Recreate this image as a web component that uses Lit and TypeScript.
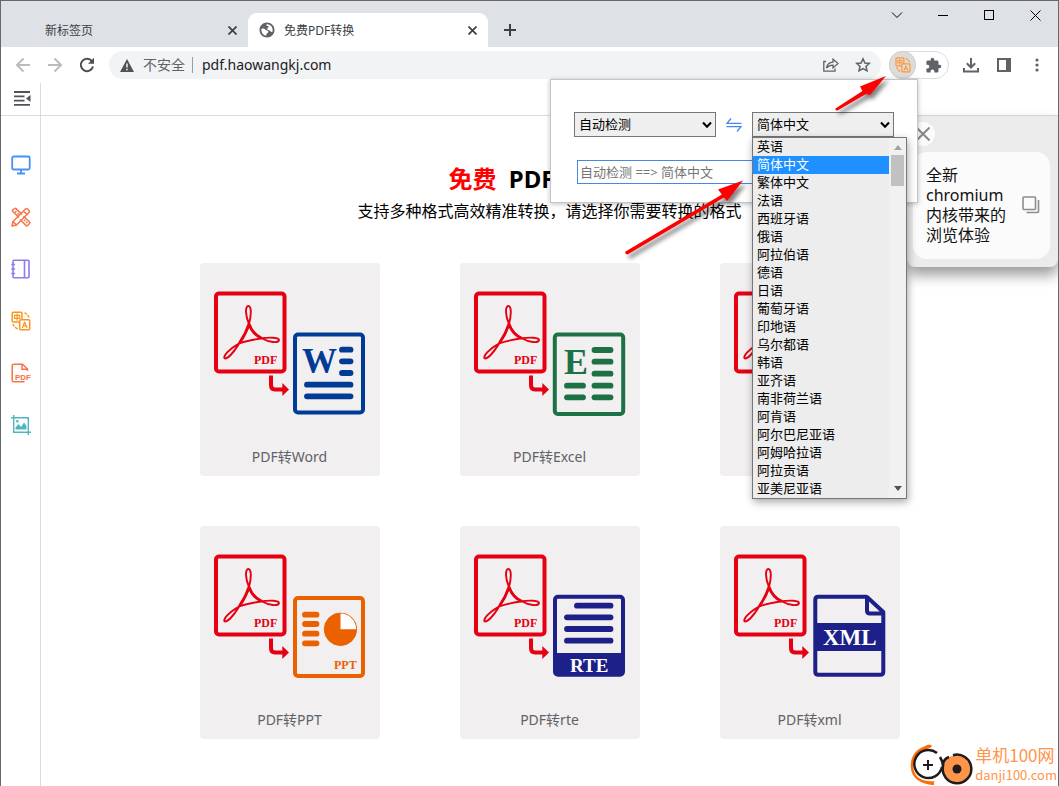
import { LitElement, html, css, svg } from 'lit';
import { customElement, property, state } from 'lit/decorators.js';

const LANGUAGES = [
  '英语', '简体中文', '繁体中文', '法语', '西班牙语', '俄语', '阿拉伯语', '德语', '日语', '葡萄牙语',
  '印地语', '乌尔都语', '韩语', '亚齐语', '南非荷兰语', '阿肯语', '阿尔巴尼亚语', '阿姆哈拉语', '阿拉贡语', '亚美尼亚语',
];

const RED = '#e60012';
const line = (x1: number, x2: number, y: number) => svg`<path d="M${x1 + 3} ${y}H${x2 - 3}" stroke-width="5.8" stroke-linecap="round"/>`;

// Right-hand document of each conversion picture
const documents: Record<string, unknown> = {
  word: svg`<g stroke="#003c96" fill="none">
    <rect x="95" y="71.5" width="68" height="78" rx="3" stroke-width="4"/>
    ${line(139, 153.5, 86.7)}${line(139, 153.5, 98.3)}${line(139, 153.5, 110)}
    ${line(104, 153.5, 121.7)}${line(104, 153.5, 133.3)}
    <text class="mark" x="102" y="110" font-size="35" fill="#003c96" stroke="none">W</text></g>`,
  excel: svg`<g stroke="#1c7145" fill="none">
    <rect x="94.8" y="71.5" width="68.4" height="79.5" rx="3" stroke-width="4"/>
    ${line(131.5, 153.5, 87)}${line(131.5, 153.5, 98.7)}${line(131.5, 153.5, 110.7)}${line(131.5, 153.5, 122.7)}${line(131.5, 153.5, 134.3)}
    ${line(104, 126, 122.7)}${line(104, 126, 134.3)}
    <text class="mark" x="104" y="111" font-size="36" fill="#1c7145" stroke="none">E</text></g>`,
  ppt: svg`<g stroke="#eb6100" fill="none">
    <rect x="95" y="72" width="68" height="78" rx="3" stroke-width="4"/>
    ${line(102, 119.5, 88.7)}${line(102, 119.5, 98)}${line(102, 119.5, 107.7)}${line(102, 119.5, 117.3)}
    <circle cx="140.5" cy="103.3" r="16.2" fill="#eb6100" stroke-width="1"/>
    <path d="M140.5 103.3V87.6A15.7 15.7 0 0 1 156.2 103.3Z" fill="#fff" stroke="none"/>
    <text class="mark" x="134" y="142.5" font-size="12" fill="#eb6100" stroke="none">PPT</text></g>`,
  rte: svg`<g stroke="#1d2088" fill="none">
    <rect x="95" y="70.7" width="68" height="78" rx="3" stroke-width="4"/>
    <path d="M95 127H163V148.7H95Z" fill="#1d2088" stroke="none"/>
    ${line(114, 153.5, 79.7)}${line(104, 153.5, 91.3)}${line(104, 153.5, 103)}${line(104, 153.5, 114.7)}
    <text class="mark" x="110" y="145.5" font-size="19" fill="#fff" stroke="none">RTE</text></g>`,
  xml: svg`<g stroke="#1d2088" fill="none">
    <path d="M146.5 70.7H98.3Q95.3 70.7 95.3 73.7V145.7Q95.3 148.7 98.3 148.7H160.3Q163.3 148.7 163.3 145.7V86L147 71V84.500Q147 87.500 150 87.500H163" stroke-width="4" stroke-linejoin="round"/>
    <path d="M94 97H165V125H94Z" fill="#1d2088" stroke="none"/>
    <text class="mark" x="103" y="119" font-size="23" fill="#fff" stroke="none">XML</text></g>`,
};

@customElement('convert-card')
class ConvertCard extends LitElement {
  @property() kind = 'word';
  @property() label = '';

  static styles = css`
    :host { display: block; }
    .card { display: flex; flex-direction: column; height: 213px; border-radius: 4px; background: #f1eff0; color: #606266; text-decoration: none; text-align: center; }
    .picture { display: block; width: 100%; height: 180px; }
    .caption { font-size: 14px; line-height: 28px; }
    .mark { font-family: "Liberation Serif", "Times New Roman", serif; font-weight: 700; }
  `;

  render() {
    return html`<a class="card" href="#">
      <svg class="picture" viewBox="0 0 180 180" aria-hidden="true">
        <rect x="16" y="30.5" width="68.500" height="78" rx="3" fill="none" stroke="${RED}" stroke-width="4"/>
        <path d="M49 61C45 52 45.200 43 48.300 43C51.500 43 51.500 52 49 61C47 68 43 74 39.300 80.300C34 89 28 95.500 25 95.500C22 94 29 86 39.300 80.300C46 78 54 76.500 61.700 75.300C70 74 79 74.500 79 77C78.500 80.500 69 79.500 61.700 75.300C55 72 51 66 49 61Z" fill="none" stroke="${RED}" stroke-width="1.900"/>
        <path d="M49 61C51 67 55.500 72.500 61.700 75.300M49 61C46.500 69 43 75 39.300 80.300" fill="none" stroke="${RED}" stroke-width="2.800"/>
        <text class="mark" x="54" y="101" font-size="12" fill="${RED}">PDF</text>
        <path d="M71 112.500V122Q71 126.500 75 126.500H83" fill="none" stroke="${RED}" stroke-width="4"/>
        <path d="M82.300 120L89 126.500L82.300 133Z" fill="${RED}"/>
        ${documents[this.kind]}
      </svg>
      <span class="caption">${this.label}</span>
    </a>`;
  }
}

const translateIcon = svg`<g fill="none" stroke="currentColor" stroke-width="1.500" stroke-linecap="round" stroke-linejoin="round">
  <path d="M11 8V2.200Q11 1.200 10 1.200H2.200Q1.200 1.200 1.200 2.200V10Q1.200 11 2.200 11H8"/>
  <rect x="8.700" y="8.700" width="10" height="10" rx="1"/>
  <path d="M3.500 4.300H8.700V7.300H3.500ZM6.100 2.800V9.300" stroke-width="1.200"/>
  <path d="M11.500 16.500L13.700 11L15.900 16.500M12.300 14.800H15.100" stroke-width="1.200"/>
  <path d="M14 2L15.500 3M17 4.500L17.800 6M2.200 13.500L3 15M4.500 16.500L6 17.700"/></g>`;

@customElement('app-root')
class AppRoot extends LitElement {
  @state() target = '简体中文';

  static styles = css`
    :host { display: block; font-family: "Noto Sans", "Noto Sans CJK SC", sans-serif; font-size: 13px; color: #000; }
    * { box-sizing: border-box; }
    button { padding: 0; border: 0; background: none; color: inherit; font: inherit; display: flex; align-items: center; justify-content: center; }
    svg { display: block; flex: none; }
    .frame { position: relative; display: flex; flex-direction: column; min-height: 100vh; border: 1px solid #66686b; background: #fff; overflow: hidden; }

    .tabs { display: flex; align-items: flex-end; height: 46px; background: #dee1e6; color: #3c4043; }
    .tab { display: flex; align-items: center; width: 240px; height: 34px; padding: 0 10px; font-size: 12px; }
    .tab .name { flex: 1; }
    .idle { width: 247px; padding-left: 44px; }
    .active { border-radius: 9px 9px 0 0; background: #fff; }
    .active .name { margin-left: 8px; }
    .tab-close { width: 12px; height: 12px; }
    .new-tab { width: 28px; height: 34px; margin-left: 8px; }
    .window { display: flex; align-self: flex-start; margin-left: auto; color: #000; }
    .window button { width: 46px; height: 28px; }

    .toolbar { display: flex; align-items: center; height: 36px; padding: 0 5px 0 6px; color: #5f6368; }
    .toolbar > button { width: 32px; height: 28px; }
    .toolbar > .tool { width: 33px; }
    .off { color: #babcbe; }
    .address { flex: 1; display: flex; align-items: center; height: 28px; min-width: 0; margin-left: 6px; padding: 0 10px 0 11px; border-radius: 14px; background: #f1f3f4; }
    .unsafe { margin-left: 9px; padding-right: 7px; border-right: 1px solid #9a9da1; font-size: 14px; line-height: 16px; white-space: nowrap; }
    .url { flex: 1; min-width: 0; height: 28px; padding: 0 9px 1px; border: 0; background: none; color: #202124; font: 14px "Noto Sans", sans-serif; }
    .address button { width: 16px; margin-left: 16px; }
    .extensions { display: flex; margin: 0 5px 0 8px; width: 60px; height: 28px; border: 1px solid #dadce0; border-radius: 14px; }
    .extensions button { width: 30px; height: 26px; }
    .extensions .translate { width: 28px; height: 28px; margin: -1px 3px 0 -1px; border-radius: 50%; background: #dcdcdc; border: 1px solid #cfcfcf; color: #ff9632; }

    .top { display: flex; height: 33px; border-bottom: 1px solid #dcdcdc; color: #5f6368; }
    .fold { width: 40px; border-right: 1px solid #dcdcdc; padding: 0 0 2px 4px; }
    .body { display: flex; flex: 1; }
    .side { display: flex; flex-direction: column; gap: 20px; flex: none; width: 40px; padding-top: 33px; border-right: 1px solid #dcdcdc; }
    .side button { height: 32px; width: 39px; }
    .blue { color: #4591f5; } .coral { color: #f77449; } .violet { color: #8d7bf2; } .orange { color: #f9941e; } .teal { color: #4fb6c0; }
    .main { flex: 1; display: flex; flex-direction: column; align-items: center; padding: 47px 20px; }
    h1 { margin: 0 0 5px; font-size: 24px; line-height: 32px; font-weight: 700; white-space: pre; }
    h1 em { font-style: normal; color: #f00; margin-right: 6px; }
    .lead { margin: 0 0 41px; font-size: 16px; line-height: 22px; }
    .grid { display: grid; grid-template-columns: repeat(3, 180px); gap: 50px 80px; }

    .tip { position: absolute; top: 115px; right: 0; width: 151px; padding: 36px 8px 8px 6px; border-radius: 0 0 8px 8px; background: #ebebeb; box-shadow: 0 8px 14px rgba(0,0,0,.4); }
    .tip-close { position: absolute; top: 6px; left: 4px; width: 24px; height: 24px; border-radius: 50%; background: #fbfbfb; color: #888; }
    .tip-card { display: flex; align-items: center; justify-content: space-between; padding: 13px 10px 14px 13px; border-radius: 14px; background: #fbfbfb; font-size: 16px; line-height: 20px; color: #111; }
    .tip-card p { margin: 0; width: 84px; }
    .tip-card button { color: #8c8c8c; }

    .popup { position: absolute; top: 78px; right: 140px; width: 368px; height: 124px; padding: 32px 23px; border: 1px solid #c4c6c9; background: #fff; box-shadow: 0 1px 5px rgba(0,0,0,.25); }
    .choices { display: flex; align-items: center; justify-content: space-between; }
    .choice { display: grid; width: 142px; }
    .choice > * { grid-area: 1 / 1; }
    .choice select { appearance: none; width: 142px; height: 25px; padding: 0 4px 2px; border: 1px solid #767676; border-radius: 0; background: #efefef; color: #000; font: inherit; outline: none; }
    .choice svg { place-self: center end; margin-right: 4px; pointer-events: none; }
    .query { display: block; width: 315px; height: 24px; margin: 23px 0 0 3px; padding: 0 2px 1px; border: 1px solid #4a86e8; font: inherit; outline: none; background: #fff; }
    .query::placeholder { color: #757575; }
    .list { position: absolute; z-index: 2; top: 57px; left: 201px; display: flex; width: 155px; border: 1px solid #767676; background: #ededed; box-shadow: 1px 3px 8px rgba(0,0,0,.35); }
    .list ul { flex: 1; margin: 0; padding: 0; list-style: none; }
    .list li { height: 18px; padding-left: 4px; line-height: 16px; white-space: nowrap; }
    .list .chosen { background: #1e90ff; color: #fff; }
    .bar { display: flex; flex-direction: column; align-items: center; width: 17px; padding: 7px 0; background: #f1f1f1; }
    .thumb { width: 13px; height: 31px; margin: 5px 0 auto; background: #c1c1c1; }

    .pointer { position: absolute; z-index: 3; pointer-events: none; filter: drop-shadow(3px 4px 2px rgba(0,0,0,.5)); }
    .near { top: 66px; left: 826px; }
    .far { top: 168px; left: 616px; }
    .brand { position: absolute; right: 1px; bottom: 0; display: flex; align-items: center; color: #ff944b; font-family: "Noto Sans CJK SC", sans-serif; }
    .brand p { margin: 0; font-size: 17px; line-height: 20px; white-space: nowrap; }
    .brand small { display: block; font-size: 13px; line-height: 20px; }
  `;

  private pick(e: Event) {
    this.target = (e.target as HTMLSelectElement).value;
  }

  private chevron() {
    return html`<svg width="10" height="8" viewBox="0 0 10 8" fill="none" stroke="#000" stroke-width="2"><path d="M1 1.500L5 5.800L9 1.500"/></svg>`;
  }

  render() {
    return html`<div class="frame">
      <nav class="tabs" aria-label="标签页">
        <div class="tab idle"><span class="name">新标签页</span>
          <button class="tab-close" aria-label="关闭">${this.cross(9, 1.7)}</button></div>
        <div class="tab active">
          <svg width="18" height="18" viewBox="0 0 24 24" fill="#5f6368"><path d="M12 2C6.480 2 2 6.480 2 12s4.480 10 10 10 10-4.480 10-10S17.520 2 12 2zM4.500 12c0-.600.100-1.200.300-1.800C7 9.500 9 10.500 10 11.500c1 1.200 3.500.500 3.800 2.500.200 2-2.300 2-2.500 3.500-.100 1-.300 1.700-.800 2-3.500-.700-6-3.800-6-7.500zM19 14.500c-1.500.500-2.500-.500-3-1.500-.600-1.200-2.500-.500-3.300-1.500-.900-1.200.300-2.500 1.300-3.200 1-.600-.200-1.800-1.200-1.600-1.300.300-1.800-1-1.300-2.200 4.300-.200 7.700 3 8 7 .100 1-.100 2-.500 3z"/></svg>
          <span class="name">免费PDF转换</span>
          <button class="tab-close" aria-label="关闭">${this.cross(9, 1.7)}</button></div>
        <button class="new-tab" aria-label="新标签页"><svg width="12" height="12" viewBox="0 0 12 12" stroke="#3c4043" stroke-width="2"><path d="M6 0V12M0 6H12"/></svg></button>
        <div class="window">
          <button aria-label="搜索标签页"><svg width="12" height="7" viewBox="0 0 12 7" fill="none" stroke="currentColor"><path d="M1 .500L6 5.500L11 .500"/></svg></button>
          <button aria-label="最小化"><svg width="10" height="10" viewBox="0 0 10 10" stroke="currentColor"><path d="M0 5.500H10"/></svg></button>
          <button aria-label="最大化"><svg width="10" height="10" viewBox="0 0 10 10" fill="none" stroke="currentColor"><rect x=".500" y=".500" width="9" height="9"/></svg></button>
          <button aria-label="关闭窗口">${this.cross(11, 1)}</button>
        </div>
      </nav>

      <div class="toolbar">
        <button class="off" aria-label="后退"><svg width="16" height="16" viewBox="0 0 16 16" fill="none" stroke="currentColor" stroke-width="2"><path d="M15 8H2.500M8.500 1.500L2 8L8.500 14.500"/></svg></button>
        <button class="off" aria-label="前进"><svg width="16" height="16" viewBox="0 0 16 16" fill="none" stroke="currentColor" stroke-width="2"><path d="M1 8H13.500M7.500 1.500L14 8L7.500 14.500"/></svg></button>
        <button aria-label="刷新"><svg width="16" height="16" viewBox="0 0 16 16" fill="none" stroke="#4b4e52" stroke-width="2"><path d="M13 4.200A6.200 6.200 0 1 0 14 9.600"/><path d="M15 .800V6.800H9Z" fill="#4b4e52" stroke="none"/></svg></button>
        <div class="address">
          <svg width="14" height="13" viewBox="0 0 14 13"><path d="M7 0L14 13H0Z" fill="#4f5256"/><path d="M7 4.500V8.500M7 9.700V11.300" stroke="#f1f3f4" stroke-width="1.500"/></svg>
          <span class="unsafe">不安全</span>
          <input class="url" aria-label="地址" .value=${'pdf.haowangkj.com'}>
          <button aria-label="分享"><svg width="16" height="14" viewBox="0 0 16 14" fill="none" stroke="currentColor" stroke-width="1.300"><path d="M3 3.500H.800V13.200H12V10.500M3.500 10C4 6.500 6.500 4.300 10 4.200V1.200L15 5.600L10 9.900V7.200C7.200 7.200 5 8 3.500 10Z"/></svg></button>
          <button aria-label="收藏"><svg width="16" height="16" viewBox="0 0 16 16" fill="none" stroke="currentColor" stroke-width="1.500"><path d="M8 1.800L9.900 6L14.300 6.400L11 9.400L12 13.800L8 11.500L4 13.800L5 9.400L1.700 6.400L6.100 6Z"/></svg></button>
        </div>
        <div class="extensions">
          <button class="translate" aria-label="翻译"><svg width="16" height="16" viewBox="0 0 20 20">${translateIcon}</svg></button>
          <button aria-label="扩展程序"><svg width="17" height="17" viewBox="0 0 24 24" fill="currentColor"><path d="M20.500 11H19V7c0-1.100-.900-2-2-2h-4V3.500a2.500 2.500 0 0 0-5 0V5H4c-1.100 0-2 .900-2 2v3.800h1.500a2.700 2.700 0 0 1 0 5.400H2V20c0 1.100.900 2 2 2h3.800v-1.500a2.700 2.700 0 0 1 5.400 0V22H17c1.100 0 2-.900 2-2v-4h1.500a2.500 2.500 0 0 0 0-5z"/></svg></button>
        </div>
        <button class="tool" aria-label="下载"><svg width="16" height="16" viewBox="0 0 16 16" fill="none" stroke="currentColor" stroke-width="2"><path d="M8 1V10M3.800 6.300L8 10.500L12.200 6.300M1 11V14.500H15V11"/></svg></button>
        <button class="tool" aria-label="侧边栏"><svg width="14" height="14" viewBox="0 0 14 14"><path d="M1 1H13V13H1Z" fill="none" stroke="currentColor" stroke-width="2"/><path d="M9 0H14V14H9Z" fill="currentColor"/></svg></button>
        <button class="tool" aria-label="菜单"><svg width="4" height="14" viewBox="0 0 4 14" fill="currentColor"><circle cx="2" cy="2" r="1.600"/><circle cx="2" cy="7" r="1.600"/><circle cx="2" cy="12" r="1.600"/></svg></button>
      </div>

      <header class="top">
        <button class="fold" aria-label="收起"><svg width="17" height="15" viewBox="0 0 17 15" stroke="#505357" stroke-width="1.800" fill="none"><path d="M0 1H16M0 5.300H10.500M0 9.600H10.500M0 13.900H16"/><path d="M12 7.500L16.500 4V11Z" fill="#505357" stroke="none"/></svg></button>
      </header>
      <div class="body">
        <aside class="side">
          <button class="blue" aria-label="桌面"><svg width="20" height="20" viewBox="0 0 20 20" fill="none" stroke="currentColor" stroke-width="1.800"><rect x="1.200" y="1.500" width="17.500" height="13" rx="1.500"/><path d="M10 14.500V18.500M6 18.500H14"/></svg></button>
          <button class="coral" aria-label="工具"><svg width="20" height="20" viewBox="0 0 20 20" fill="none" stroke="currentColor" stroke-width="1.500" stroke-linejoin="round"><path d="M8 10.500L1.800 4.500Q1 3.700 1.800 2.900L3.600 1.500Q4.300 .900 5 1.600L11 7.500M12.500 9L18.500 15Q19.200 15.800 18.500 16.500L16.500 18.500Q15.700 19.200 15 18.500L9 12.500"/><path d="M1 19L2 14.500L14.500 2Q15.500 1 16.500 2L18 3.500Q19 4.500 18 5.500L5.500 18ZM2 14.500L5.500 18M12.500 4L16 7.500M4 5.500L5.500 4M6.500 7.500L7.800 6.200M13 14L14.300 12.700M15 16L16.300 14.700"/></svg></button>
          <button class="violet" aria-label="笔记"><svg width="20" height="20" viewBox="0 0 20 20" fill="none" stroke="currentColor" stroke-width="1.600"><rect x="2" y="1.200" width="16" height="17.600" rx="1"/><path d="M13.500 1V19M.300 5.500H4M.300 10H4M.300 14.500H4"/></svg></button>
          <button class="orange" aria-label="翻译"><svg width="20" height="20" viewBox="0 0 20 20">${translateIcon}</svg></button>
          <button class="coral" aria-label="PDF"><svg width="20" height="20" viewBox="0 0 20 20" fill="none" stroke="currentColor" stroke-width="1.500"><path d="M13.500 18.800H2.500Q1.200 18.800 1.200 17.500V2.500Q1.200 1.200 2.500 1.200H11.500L16.500 6V8M11 1.500V6.300H16.500"/><text x="4" y="16.500" font-size="8" font-weight="700" font-family="Liberation Sans" fill="currentColor" stroke="none">PDF</text></svg></button>
          <button class="teal" aria-label="图片"><svg width="20" height="20" viewBox="0 0 20 20" fill="none" stroke="currentColor" stroke-width="1.400"><path d="M0 2.700H17.300V20M2.700 0V17.300H20"/><path d="M4.500 14.500V12.500L7.500 9L10 12L13 7.500L15.500 11V14.500Z" fill="currentColor" stroke="none"/><circle cx="6.300" cy="6.200" r="1.300" fill="currentColor" stroke="none"/></svg></button>
        </aside>
        <main class="main">
          <h1><em>免费</em> PDF转换工具</h1>
          <p class="lead">支持多种格式高效精准转换，请选择你需要转换的格式</p>
          <div class="grid">
            <convert-card kind="word" label="PDF转Word"></convert-card>
            <convert-card kind="excel" label="PDF转Excel"></convert-card>
            <convert-card kind="ppt" label="PDF转图片"></convert-card>
            <convert-card kind="ppt" label="PDF转PPT"></convert-card>
            <convert-card kind="rte" label="PDF转rte"></convert-card>
            <convert-card kind="xml" label="PDF转xml"></convert-card>
          </div>
        </main>
      </div>

      <section class="tip">
        <button class="tip-close" aria-label="关闭">${this.cross(14, 2)}</button>
        <div class="tip-card"><p>全新 chromium 内核带来的浏览体验</p>
          <button aria-label="复制"><svg width="18" height="18" viewBox="0 0 18 18" fill="none" stroke="currentColor" stroke-width="1.600"><rect x="1" y="1" width="12.500" height="12.500" rx="1"/><path d="M16.500 4V15.500Q16.500 16.500 15.500 16.500H4.500"/></svg></button></div>
      </section>

      <section class="popup">
        <div class="choices">
          <div class="choice"><select aria-label="源语言"><option>自动检测</option></select>${this.chevron()}</div>
          <svg width="16" height="14" viewBox="0 0 16 14" fill="none" stroke="#4a86f0" stroke-width="1.300"><path d="M5 .500L1 5.300H15.500M.500 8.700H15L11 13.500"/></svg>
          <div class="choice"><select aria-label="目标语言" .value=${this.target} @change=${this.pick}>
            ${LANGUAGES.map((n) => html`<option ?selected=${n === this.target}>${n}</option>`)}</select>${this.chevron()}</div>
        </div>
        <input class="query" aria-label="翻译内容" placeholder="自动检测 ==&gt; ${this.target}">
        <div class="list">
          <ul role="listbox" aria-label="语言">
            ${LANGUAGES.map((n) => html`<li role="option" class=${n === this.target ? 'chosen' : ''} aria-selected=${n === this.target} @click=${() => { this.target = n; }}>${n}</li>`)}
          </ul>
          <div class="bar"><svg width="8" height="5" viewBox="0 0 8 5"><path d="M0 5L4 0L8 5Z" fill="#a3a3a3"/></svg><div class="thumb"></div><svg width="8" height="5" viewBox="0 0 8 5"><path d="M0 0L4 5L8 0Z" fill="#505050"/></svg></div>
        </div>
      </section>

      <svg class="pointer near" width="70" height="50" viewBox="0 0 70 50" fill="#ff0000"><path d="M8.500 41.500L35.500 24L33 19.500L59 9L43 28L39 27L10.500 43.500Q8 43.500 8.500 41.500Z"/></svg>
      <svg class="pointer far" width="140" height="92" viewBox="0 0 140 92" fill="#ff0000"><path d="M8.500 82.500L105 25.500L101 20.500L126 11.500L110 32L107 28.500L10.500 85.500Q7.500 85.500 8.500 82.500Z"/></svg>

      <footer class="brand">
        <svg width="65" height="42" viewBox="0 0 65 42" fill="none">
          <path d="M20 2.500C7 4 1.500 13 2 23C2.500 32 9 38.500 24 40" stroke="#ff6d0a" stroke-width="2.500"/><path d="M9 8C14 2 17 0 21 1C23 2 21 4 18 4.500ZM8 34C13 37 19 37 25 37.500C22 41 15 41 8 34Z" fill="#ff6d0a"/>
          <path d="M27 9A14 14 0 1 0 32 23M30 13C33 18 34 22 33 28" stroke="#1f1b1a" stroke-width="2.500"/>
          <path d="M18 16V26M13 21H23" stroke="#1f1b1a" stroke-width="2"/>
          <circle cx="47" cy="25" r="14" fill="#ff944b"/><path d="M43 11.200A14.300 14.300 0 1 1 33 22C33 17 36 14 39 13" stroke="#1f1b1a" stroke-width="2.500"/><circle cx="47" cy="25" r="4.500" fill="#1f1b1a"/>
        </svg>
        <p>单机100网<small>danji100.com</small></p>
      </footer>
    </div>`;
  }

  private cross(size: number, weight: number) {
    return html`<svg width=${size} height=${size} viewBox="0 0 ${size} ${size}" stroke="currentColor" stroke-width=${weight}><path d="M.500 .500L${size - 0.5} ${size - 0.5}M${size - 0.5} .500L.500 ${size - 0.5}"/></svg>`;
  }
}
